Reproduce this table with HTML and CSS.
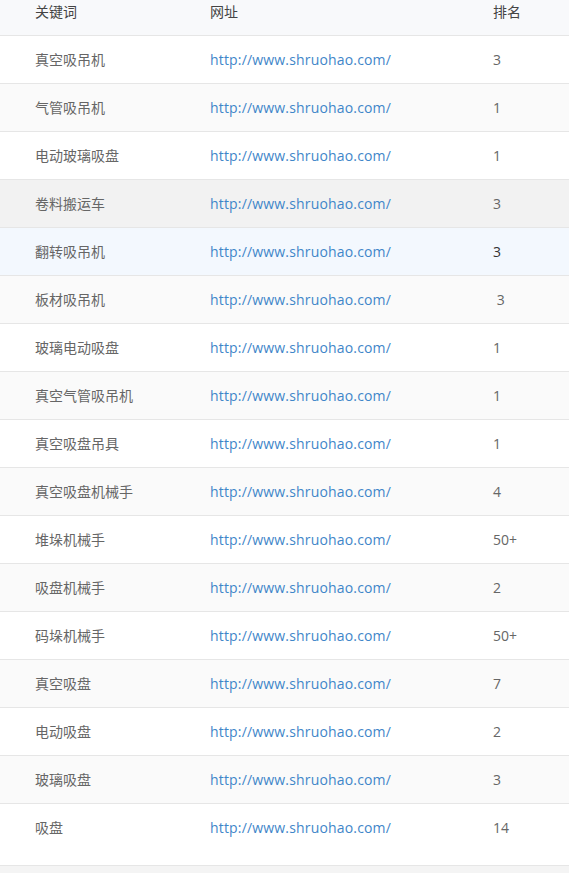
FILE: index.html
```html
<!DOCTYPE html>
<html lang="zh-CN">
<head>
<meta charset="utf-8">
<title>关键词排名</title>
<link rel="stylesheet" href="styles.css">
</head>
<body>
<div class="panel">
<table class="rank-table">
<colgroup><col class="c-kw"><col class="c-url"><col class="c-rank"></colgroup>
<thead>
<tr><th>关键词</th><th>网址</th><th>排名</th></tr>
</thead>
<tbody>
<tr><td>真空吸吊机</td><td><a href="#">http://www.shruohao.com/</a></td><td>3</td></tr>
<tr class="stripe"><td>气管吸吊机</td><td><a href="#">http://www.shruohao.com/</a></td><td>1</td></tr>
<tr><td>电动玻璃吸盘</td><td><a href="#">http://www.shruohao.com/</a></td><td>1</td></tr>
<tr class="hover"><td>卷料搬运车</td><td><a href="#">http://www.shruohao.com/</a></td><td>3</td></tr>
<tr class="active"><td>翻转吸吊机</td><td><a href="#">http://www.shruohao.com/</a></td><td class="strong">3</td></tr>
<tr class="stripe"><td>板材吸吊机</td><td><a href="#">http://www.shruohao.com/</a></td><td>&nbsp;3</td></tr>
<tr><td>玻璃电动吸盘</td><td><a href="#">http://www.shruohao.com/</a></td><td>1</td></tr>
<tr class="stripe"><td>真空气管吸吊机</td><td><a href="#">http://www.shruohao.com/</a></td><td>1</td></tr>
<tr><td>真空吸盘吊具</td><td><a href="#">http://www.shruohao.com/</a></td><td>1</td></tr>
<tr class="stripe"><td>真空吸盘机械手</td><td><a href="#">http://www.shruohao.com/</a></td><td>4</td></tr>
<tr><td>堆垛机械手</td><td><a href="#">http://www.shruohao.com/</a></td><td>50+</td></tr>
<tr class="stripe"><td>吸盘机械手</td><td><a href="#">http://www.shruohao.com/</a></td><td>2</td></tr>
<tr><td>码垛机械手</td><td><a href="#">http://www.shruohao.com/</a></td><td>50+</td></tr>
<tr class="stripe"><td>真空吸盘</td><td><a href="#">http://www.shruohao.com/</a></td><td>7</td></tr>
<tr><td>电动吸盘</td><td><a href="#">http://www.shruohao.com/</a></td><td>2</td></tr>
<tr class="stripe"><td>玻璃吸盘</td><td><a href="#">http://www.shruohao.com/</a></td><td>3</td></tr>
<tr class="last"><td>吸盘</td><td><a href="#">http://www.shruohao.com/</a></td><td>14</td></tr>
</tbody>
</table>
</div>
<div class="footer-area"></div>
</body>
</html>
```
FILE: styles.css
```css
html, body {
  margin: 0;
  padding: 0;
  background: #f4f4f4;
}
body {
  font-family: "Open Sans", "Noto Sans CJK SC", sans-serif;
  font-size: 14px;
  color: #666;
}
.panel {
  background: #fff;
  padding-bottom: 14px;
  border-bottom: 1px solid #e6e6e6;
}
.rank-table {
  width: 100%;
  border-collapse: collapse;
  table-layout: fixed;
}
.c-kw { width: 210px; }
.c-url { width: 283px; }
.rank-table th {
  height: 35px;
  padding: 2px 0 0 0;
  box-sizing: border-box;
  vertical-align: top;
  text-align: left;
  font-weight: normal;
  line-height: 20px;
  color: #444;
  background: #f8f9fb;
  border-bottom: 1px solid #e6e6e6;
}
.rank-table td {
  height: 45px;
  padding: 2px 0 0 0;
  line-height: 20px;
  vertical-align: middle;
  text-align: left;
  border-bottom: 1px solid #e6e6e6;
}
.rank-table th:first-child,
.rank-table td:first-child {
  padding-left: 35px;
}
.rank-table tr.stripe td { background: #fafafa; }
.rank-table tr.hover td { background: #f2f2f2; }
.rank-table tr.active td { background: #f3f8fe; }
.rank-table tr.last td { border-bottom: none; }
.rank-table td.strong { color: #333; }
.rank-table a {
  color: #3f86c9;
  text-decoration: none;
  letter-spacing: 0.17px;
}
.footer-area {
  height: 20px;
}
```
